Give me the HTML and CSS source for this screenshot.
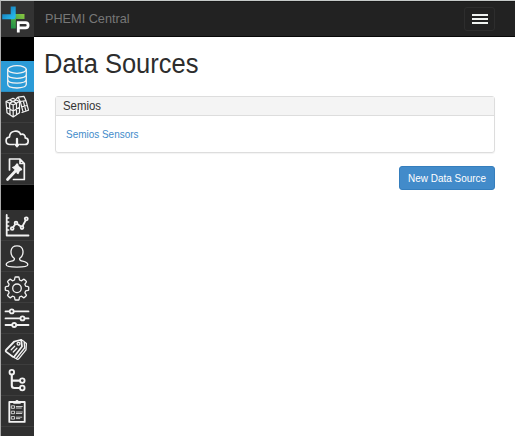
FILE: index.html
```html
<!DOCTYPE html>
<html lang="en">
<head>
<meta charset="utf-8">
<title>PHEMI Central</title>
<link rel="stylesheet" href="styles.css">
</head>
<body>
<div class="app">
  <aside class="sidebar">
    <a class="logo">
      <svg viewBox="0 0 33 36">
        <defs>
          <linearGradient id="blue" x1="0" y1="0" x2="1" y2="1"><stop offset="0" stop-color="#1265a8"/><stop offset="1" stop-color="#25b5e8"/></linearGradient>
          <linearGradient id="green" x1="0" y1="1" x2="1" y2="0"><stop offset="0" stop-color="#239347"/><stop offset="1" stop-color="#83c341"/></linearGradient>
        </defs>
        <path d="M12.500 27.500V15.600H23.500" fill="none" stroke="url(#green)" stroke-width="5" stroke-linejoin="round"/>
        <path d="M12.200 5.500v10.200H1.200" fill="none" stroke="url(#blue)" stroke-width="5" stroke-linejoin="round"/>
        <path d="M17.300 31.500V21.700H24.500q2.600 0 2.600 2.600t-2.600 2.600h-6.700" fill="none" stroke="#333" stroke-width="5"/>
        <path d="M17.300 31.500V21.700H24.500q2.600 0 2.600 2.600t-2.600 2.600h-6.700" fill="none" stroke="#fff" stroke-width="2.800"/>
      </svg>
    </a>
    <div class="spacer"></div>
    <a class="item active"><svg viewBox="0 0 33 31"><ellipse cx="16" cy="8.500" rx="9.300" ry="3.800"/><path d="M6.700 8.500v14.500c0 5.300 18.600 5.300 18.600 0v-14.500M6.700 13.300c0 5.300 18.600 5.300 18.600 0M6.700 18.200c0 5.300 18.600 5.300 18.600 0"/></svg></a>
    <a class="item"><svg viewBox="0 0 33 31"><path class="cube" d="m5 9.500 7-3.300 6.500 3.300v11.300l-6.300 4.200-6.200-4.200zM5 9.500l7.200 3.500 6.300-3.500M12.200 13v12M5.500 15.300l6.700 3.700 6.300-3.700M8.500 11.200l.6 11.600M15.500 11.200v11.600M8.500 7.900l7 3.200M15.300 7.900l-6.800 3.200"/><path class="cube" d="m15.500 6.500 1.500-1.300 6-.8 2 4.300 2.500 9.500-6.500 2.300M17 5.200l2.300 4.300 5.700-.8M19.300 9.500l2.700 10.200M20.500 14.800l5.700-1.300M22.300 9.200l2.600 9.700"/></svg></a>
    <a class="item"><svg viewBox="0 0 33 31"><path class="cloud" d="M12.300 21.500H9c-5 0-5.200-7-.5-7.400C8.700 7 18 6.500 19.600 11.500c3-1 5 1 4.600 3.400 4.300.5 3.800 6.600-.2 6.600h-4.300"/><path class="thick" d="M16 16v6"/><path class="fill" d="m12.300 20.800 3.700 4 3.700-4z"/></svg></a>
    <a class="item"><svg viewBox="0 0 33 31"><path class="cloud" d="M8.500 16V5H19l4.300 4.500V25.500H12.500M19 5v4.500h4.300"/><path class="heavy" d="m6.500 25.500 8.200-8.700"/><path class="fill" d="m10.800 13.200 2.700-1.200 2.300-2.700 1.300.5.700 2.200 2.800 2.200.7 1.700-2.400 1.200-1.500 3.100-1.500-.4-1.500-3.200z"/></svg></a>
    <div class="spacer low"></div>
    <a class="item"><svg viewBox="0 0 33 31"><path class="mid" d="M5.700 5v20.500H27.500"/><path d="M6 8h1.800M6 12h1.800M6 16h1.800M6 20h1.800"/><path class="mid" d="m11.300 18.500 3.700-5.500 5.900 4.300 4.500-8.300"/><g class="knob"><circle cx="11.200" cy="18.500" r="1.400"/><circle cx="15" cy="13" r="1.400"/><circle cx="21" cy="17.600" r="1.400"/><circle cx="25.300" cy="8.800" r="1.500"/></g></svg></a>
    <a class="item"><svg viewBox="0 0 33 31"><path d="M13.400 17.600C8.500 14 8.500 4.800 16 4.800s7.500 9.200 2.600 12.800c-.3 1.600.4 2 3 2.600 4 .9 5.200 1.800 5.200 3.600 0 3-21.600 3-21.600 0 0-1.800 1.200-2.700 5.200-3.600 2.600-.6 3.300-1 3-2.600z"/></svg></a>
    <a class="item"><svg viewBox="0 0 33 31"><path d="M14.600 5h2.800q.6 0 .7.700l.4 2.300 2 .8 2-1.400q.5-.3.900.1l1.800 1.800q.4.400.1.900l-1.400 2 .8 2 2.300.4q.7.100.7.700v2.400q0 .6-.7.700l-2.300.4-.8 2 1.400 2q.3.500-.1.900l-1.800 1.800q-.4.400-.9.100l-2-1.400-2 .8-.4 2.300q-.1.700-.7.700h-2.800q-.6 0-.7-.7l-.4-2.300-2-.8-2 1.400q-.5.300-.9-.1l-1.800-1.800q-.4-.4-.1-.9l1.400-2-.8-2-2.300-.4q-.7-.1-.7-.7v-2.400q0-.6.700-.7l2.300-.4.800-2-1.400-2q-.3-.5.100-.9l1.800-1.800q.4-.4.900-.1l2 1.400 2-.8.400-2.300q.1-.7.7-.7z"/><circle cx="16" cy="16.300" r="4.300"/></svg></a>
    <a class="item"><svg viewBox="0 0 33 31"><path class="mid" d="M4.500 8.400H27.500M4.500 15.400H27.500M4.500 22H27.500"/><g class="knob"><circle cx="10.700" cy="8.400" r="2"/><circle cx="21.500" cy="15.400" r="2"/><circle cx="13.200" cy="22" r="2"/></g></svg></a>
    <a class="item"><svg viewBox="0 0 33 31"><path class="mid" d="m5 16 8.300-8.500 6.900-1.700.8 6.700-7.500 9.800q-.9 1-2 .2L5 17.600q-.7-.8 0-1.600z"/><path d="M20.200 5.800l3 1.700.4 6.500-8 10q-1.200 1-2.700-.8M23.400 8l2 1.600-.4 6.300-7.500 9.200q-1 .8-2.200-.5"/><path d="m10.200 15.800 3.500-3.500M12.300 18l3.600-3.700"/><circle cx="17.500" cy="9.700" r="1.400"/></svg></a>
    <a class="item"><svg viewBox="0 0 33 31"><path class="tree" d="M10.800 9.300v11.200q0 2.500 2.500 2.500H19M11 15.600H19"/><g class="knob"><circle cx="10.800" cy="7.200" r="2.300"/><circle cx="21.300" cy="15.600" r="2.300"/><circle cx="21.300" cy="23" r="2.300"/></g></svg></a>
    <a class="item"><svg viewBox="0 0 33 31"><path class="mid" d="M8.300 6h15.400v19.900H8.300z"/><path class="fill" d="M12.300 7.800V5h2q1.700-2 3.400 0h2v2.800z"/><path class="fine" d="M10.700 9.800h2.800v2.500h-2.800zM10.700 15.200h2.800v2.500h-2.800zM10.700 20.600h2.800v2.500h-2.800zM15.300 10.500h6M15.300 12h5M15.300 16h6M15.300 17.500h5.500M15.300 21.200h5.500M15.300 22.600h3.500"/></svg></a>
  </aside>
  <div class="page">
    <header class="navbar">
      <span class="brand">PHEMI Central</span>
      <button class="toggle" aria-label="Menu"><i></i><i></i><i></i></button>
    </header>
    <main class="content">
      <h1>Data Sources</h1>
      <section class="panel">
        <h2><span>Semios</span></h2>
        <div class="panel-body"><a>Semios Sensors</a></div>
      </section>
      <div class="actions"><button class="primary"><span>New Data Source</span></button></div>
    </main>
  </div>
</div>
</body>
</html>
```
FILE: styles.css
```css
* { box-sizing: border-box; }
body { margin: 0; background: #fff; color: #333; font-family: "Liberation Sans", Arial, sans-serif; }
.app { display: flex; height: 436px; overflow: hidden; border-top: 1px solid #c6cac9; border-left: 1px solid #aaa; }
.sidebar { width: 33px; flex: none; background: #303030; }
.logo { display: block; height: 36px; background: #333; }
.logo svg, .item svg { display: block; width: 33px; height: 100%; }
.spacer { height: 24px; background: #000; }
.spacer.low { height: 25px; }
.item { display: block; height: 31px; border-bottom: 1px solid #3d3d3d; }
.item svg { height: 31px; fill: none; stroke: #f2f2f2; stroke-width: 1.3; stroke-linejoin: round; stroke-linecap: round; }
.item.active { background: #2b9bd7; border-color: #2b8cc0; }
.item .mid { stroke-width: 1.8; }
.item .tree { stroke-width: 2.1; }
.item .cloud { stroke-width: 1.7; }
.item .cube { stroke-width: 1.2; }
.item .thick { stroke-width: 2.3; }
.item .heavy { stroke-width: 2.8; }
.item .fine { stroke-width: .8; }
.item .fill { fill: #f2f2f2; stroke: none; }
.knob { fill: #303030; stroke-width: 1.8; }
.page { flex: 1; }
.navbar { display: flex; align-items: center; justify-content: space-between; height: 36px; padding: 0 20px 0 11px; background: #222; border-top: 1px solid #191919; border-bottom: 1px solid #080808; }
.brand { font-size: 13.6px; line-height: 18px; color: #777; transform: scaleX(.933); transform-origin: left; }
.toggle { display: flex; flex-direction: column; align-items: center; justify-content: center; gap: 2px; width: 31px; height: 24px; padding: 0; border: 1px solid #2d2d2d; border-radius: 3px; background: none; }
.toggle i { width: 16px; height: 2px; background: #f0f3f1; }
.content { padding: 11px 20px 0 10px; }
h1 { margin: 0; font-size: 27px; line-height: 32px; font-weight: 400; color: #2d2d2d; transform: scaleX(.944); transform-origin: left; }
.panel { height: 57px; margin: 16px 0 0 11px; border: 1px solid #ddd; border-radius: 3px; box-shadow: 0 1px 1px rgba(0,0,0,.05); }
h2 { height: 19px; margin: 0; padding-left: 7px; border-bottom: 1px solid #ddd; background: #f4f4f4; font-size: 12px; line-height: 18px; font-weight: 400; }
h2 span, .panel-body a, .primary span { display: inline-block; }
h2 span { transform: scaleX(.95); transform-origin: left; }
.panel-body { padding: 11px 10px 0; font-size: 11px; line-height: 14px; color: #428bca; }
.panel-body a, .primary span { transform: scaleX(.905); }
.panel-body a { transform-origin: left; }
.actions { display: flex; justify-content: flex-end; margin-top: 13px; }
.primary { width: 96px; height: 24px; padding: 0; border: 1px solid #357ebd; border-radius: 3px; background: #428bca; color: #fff; font: 11px/14px "Liberation Sans", Arial, sans-serif; white-space: nowrap; }
.primary span { margin: 0 -5px; }
```
